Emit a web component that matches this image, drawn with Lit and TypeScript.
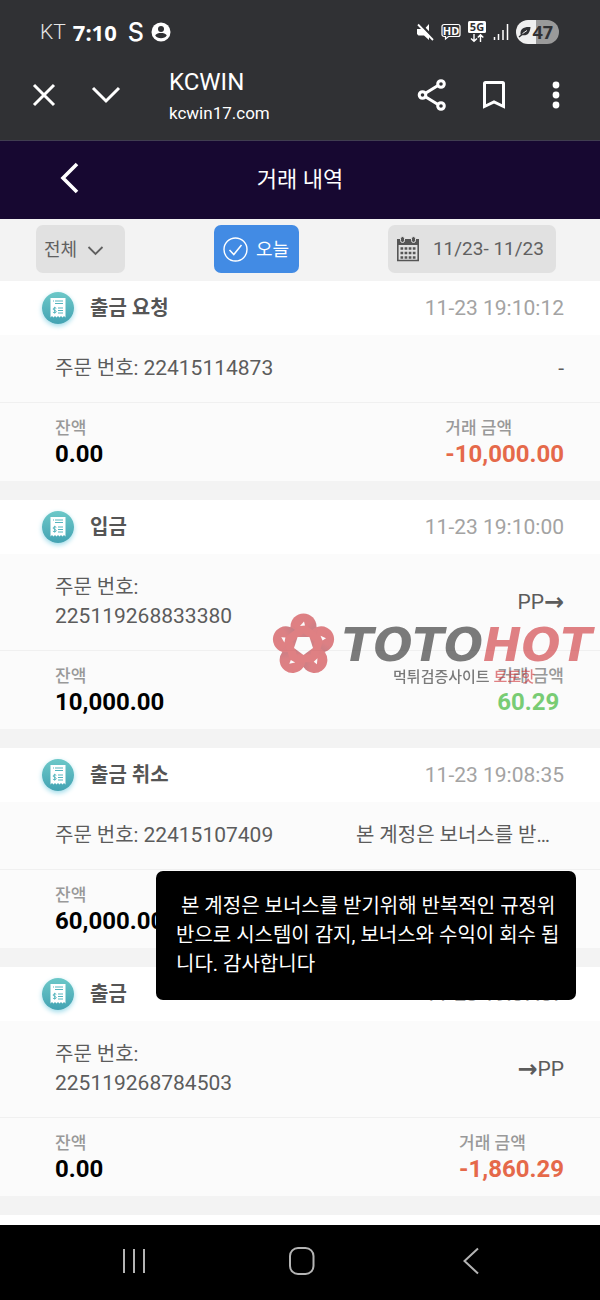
import { LitElement, html, css, svg, nothing } from "lit";
import { customElement, property } from "lit/decorators.js";
import { classMap } from "lit/directives/class-map.js";

interface Transaction {
  title: string;
  time: string;
  order: string;
  route?: string;
  memo?: string;
  balance: string;
  amount: string;
  positive?: boolean;
  notice?: string;
  watermark?: boolean;
}

const NOTICE =
  "본 계정은 보너스를 받기위해 반복적인 규정위반으로 시스템이 감지, 보너스와 수익이 회수 됩니다. 감사합니다";

const TRANSACTIONS: Transaction[] = [
  { title: "출금 요청", time: "11-23 19:10:12", order: "22415114873", route: "-", balance: "0.00", amount: "-10,000.00" },
  { title: "입금", time: "11-23 19:10:00", order: "225119268833380", route: "PP→", balance: "10,000.00", amount: "60.29", positive: true, watermark: true },
  { title: "출금 취소", time: "11-23 19:08:35", order: "22415107409", memo: NOTICE, balance: "60,000.00", amount: "60,000.00", positive: true, notice: NOTICE },
  { title: "출금", time: "11-23 19:07:07", order: "225119268784503", route: "→PP", balance: "0.00", amount: "-1,860.29" },
];

const KOREAN_STACK = css`Roboto, "Noto Sans CJK KR", sans-serif`;

@customElement("status-bar")
export class StatusBar extends LitElement {
  static styles = css`
    :host { display: flex; align-items: center; justify-content: space-between; height: 64px; padding: 0 41px 0 40px; color: #fff; }
    .side { display: flex; align-items: center; }
    .left { gap: 7px; }
    .right { gap: 7px; }
    .carrier { font: 300 21px/28px Roboto, sans-serif; color: #e6e6e6; }
    .clock { font: 700 22px/28px "Noto Sans", sans-serif; }
    .app { margin-left: 4px; font: 500 25px/28px Inter, sans-serif; }
    .battery { display: flex; align-items: center; gap: 1px; height: 24px; padding: 0 6px 0 2px; border-radius: 12px; color: #303134; background: linear-gradient(90deg, #efefef 47%, #9a9a9a 47%); font: 700 18px/24px "Noto Sans", sans-serif; }
    svg { display: block; }
    .small { font: 700 11px "Noto Sans", sans-serif; }
  `;

  render() {
    return html`
      <div class="side left">
        <span class="carrier">KT</span>
        <span class="clock">7:10</span>
        <span class="app">S</span>
        <svg width="20" height="20" viewBox="0 0 20 20" aria-hidden="true">
          <circle cx="10" cy="10" r="9.5" fill="#fff" />
          <circle cx="10" cy="7" r="3" fill="#303134" />
          <path d="M4.200 13.200C5.400 11.300 7.600 10.900 10 10.900s4.600.4 5.800 2.300C14.600 15.400 12.600 16.200 10 16.200S5.400 15.400 4.200 13.200z" fill="#303134" />
        </svg>
      </div>
      <div class="side right">
        <svg width="18" height="18" viewBox="0 0 18 18" aria-hidden="true">
          <path d="M1 6h4l3.500 0L13 1v16L8 12.500H2.500L1 11z" fill="#fff" />
          <path d="M3.500.5 18.500 15.500" stroke="#303134" stroke-width="2.600" />
          <path d="M2 1.500 17 17" stroke="#fff" stroke-width="1.800" />
        </svg>
        <svg width="20" height="18" viewBox="0 0 20 18" aria-hidden="true">
          <path d="M3 1.500h14a2 2 0 0 1 2 2v8a2 2 0 0 1-2 2H7.500L4.500 16v-2.500H3a2 2 0 0 1-2-2v-8a2 2 0 0 1 2-2z" fill="none" stroke="#fff" stroke-width="1.200" />
          <text class="small" x="10" y="11.500" text-anchor="middle" fill="#fff">HD</text>
        </svg>
        <svg width="18" height="22" viewBox="0 0 18 22" aria-hidden="true">
          <rect width="18" height="12" rx="1.500" fill="#fff" />
          <text class="small" x="9" y="10" text-anchor="middle" fill="#303134">5G</text>
          <path d="M6 13v7M3 17.500 6 20.300 9 17.500M12.500 21v-7M9.800 16.500l2.700-2.800 2.800 2.800" fill="none" stroke="#fff" stroke-width="1.400" />
        </svg>
        <svg width="16" height="18" viewBox="0 0 16 18" aria-hidden="true">
          <path d="M1.500 14v3M5.500 11v6M10 7v10M14.500 1v16" stroke="#fff" stroke-width="1.500" />
        </svg>
        <div class="battery">
          <svg width="13" height="14" viewBox="0 0 13 14" aria-hidden="true">
            <path d="M12.500 2C6 1.500 2 3.500 2.500 9.500 8 12 12 9 12.500 2z" fill="#303134" />
            <path d="M1 12C3.500 10 6 8 9 5.500" fill="none" stroke="#303134" stroke-width="1.400" />
            <path d="M4.500 8.600 9 5.500" stroke="#efefef" stroke-width="1" />
          </svg>
          <span>47</span>
        </div>
      </div>
    `;
  }
}

@customElement("browser-bar")
export class BrowserBar extends LitElement {
  static styles = css`
    :host { display: flex; align-items: center; gap: 30px; padding: 0 28px 14px; color: #fff; }
    button { display: grid; place-items: center; width: 32px; height: 32px; padding: 0; border: 0; background: none; color: inherit; }
    svg { display: block; fill: none; stroke: currentColor; stroke-width: 3; }
    .page { flex: 1; min-width: 0; padding-left: 17px; }
    .name { font: 400 24px/36px Roboto, sans-serif; }
    .host { font: 400 17px/26px Roboto, sans-serif; }
  `;

  render() {
    return html`
      <button aria-label="닫기"><svg width="24" height="24" viewBox="0 0 24 24"><path d="M2 2 22 22M22 2 2 22" /></svg></button>
      <button aria-label="최소화"><svg width="30" height="20" viewBox="0 0 30 20"><path d="M2 3 15 16 28 3" /></svg></button>
      <div class="page">
        <div class="name">KCWIN</div>
        <div class="host">kcwin17.com</div>
      </div>
      <button aria-label="공유">
        <svg width="30" height="32" viewBox="0 0 30 32"><path d="M8 14.500 21 6.500M8 17.500 21 25.500" /><circle cx="5.500" cy="16" r="3.300" /><circle cx="24" cy="5" r="3.300" /><circle cx="24" cy="27" r="3.300" /></svg>
      </button>
      <button aria-label="북마크">
        <svg width="24" height="30" viewBox="0 0 24 30"><path d="M2.500 3.500a1 1 0 0 1 1-1h17a1 1 0 0 1 1 1V26.500L12 22 2.500 26.500z" /></svg>
      </button>
      <button aria-label="더보기">
        <svg width="8" height="28" viewBox="0 0 8 28"><g fill="currentColor" stroke="none"><circle cx="4" cy="4" r="3.400" /><circle cx="4" cy="14" r="3.400" /><circle cx="4" cy="24" r="3.400" /></g></svg>
      </button>
    `;
  }
}

@customElement("filter-bar")
export class FilterBar extends LitElement {
  static styles = css`
    :host { display: flex; justify-content: space-between; padding: 6px 44px 8px 36px; background: #f3f3f3; color: #606060; }
    .control { display: flex; align-items: center; height: 48px; border: 0; border-radius: 7px; background: #e1e1e1; color: inherit; font: 400 18px/24px ${KOREAN_STACK}; }
    .kind { position: relative; width: 89px; }
    .kind select { width: 100%; height: 100%; padding: 2px 8px 0; border: 0; background: none; appearance: none; color: inherit; font: inherit; }
    .kind svg { position: absolute; right: 21px; top: 20px; pointer-events: none; }
    .today { gap: 8px; padding: 0 10px 0 9px; background: #428be4; color: #fff; }
    .today span { padding-top: 2px; }
    .range { gap: 13px; padding: 0 12px 0 8px; font-size: 19px; }
    svg { display: block; }
  `;

  render() {
    return html`
      <div class="control kind">
        <select aria-label="거래 유형"><option>전체</option></select>
        <svg width="17" height="11" viewBox="0 0 17 11"><path d="M1.500 2 8.500 9 15.500 2" fill="none" stroke="#606060" stroke-width="1.800" /></svg>
      </div>
      <button class="control today" aria-pressed="true">
        <svg width="25" height="25" viewBox="0 0 25 25"><circle cx="12.500" cy="12.500" r="11.500" fill="none" stroke="#fff" stroke-width="1.400" /><path d="M6.500 13 10.800 17.500 18.500 8" fill="none" stroke="#fff" stroke-width="1.500" /></svg>
        <span>오늘</span>
      </button>
      <button class="control range">
        <svg width="24" height="26" viewBox="0 0 24 26">
          <path d="M1.800 4h20.400v20.500H1.800z" fill="none" stroke="#555" stroke-width="1.600" />
          <path d="M1 3h22v6H1z" fill="#555" />
          <g fill="#555" stroke="#e1e1e1"><rect x="4.500" y=".5" width="4" height="6" rx="2" /><rect x="15.500" y=".5" width="4" height="6" rx="2" /></g>
          <path d="M4.500 12.500h15M4.500 17h15M4.500 21.500h15" stroke="#555" stroke-width="2.600" stroke-dasharray="2.700 1.400" />
        </svg>
        11/23- 11/23
      </button>
    `;
  }
}

@customElement("brand-watermark")
export class BrandWatermark extends LitElement {
  static styles = css`
    :host { display: flex; align-items: flex-start; gap: 7px; opacity: 0.6; color: #252525; pointer-events: none; white-space: nowrap; }
    svg { display: block; flex: none; }
    .words { display: flex; flex-direction: column; padding-top: 10px; }
    .name { font: italic 700 46px/44px "DejaVu Sans", sans-serif; }
    .tag { padding-left: 51px; font: 500 15px/20px ${KOREAN_STACK}; }
    .red { color: #cd3035; }
  `;

  render() {
    const turns = [0, 72, 144, 216, 288];
    return html`
      <svg width="63" height="63" viewBox="-31.500 -32 63 63" aria-hidden="true">
        <defs>
          <linearGradient id="fold" x1="0" y1="0" x2="1" y2="1">
            <stop offset="0" stop-color="#cd3035" />
            <stop offset=".55" stop-color="#c82f36" />
            <stop offset="1" stop-color="#8a2a38" />
          </linearGradient>
          <mask id="holes">
            <rect x="-32" y="-32" width="64" height="64" fill="#fff" />
            <path d="M-5.900-8.100H5.900L9.500 3.100 0 10-9.500 3.100z" fill="#000" />
            ${turns.map((a) => svg`<path d="M-3.500-19 .5-23.500 1.500-19.500z" fill="#000" transform="rotate(${a})" />`)}
          </mask>
        </defs>
        <g mask="url(#holes)">
          <circle r="22" fill="#cd3035" />
          ${turns.map((a) => svg`<circle cy="-18.500" r="13" fill="url(#fold)" transform="rotate(${a})" />`)}
          ${turns.map((a) => svg`<path d="M-9-23 13-7" stroke="#cd3035" stroke-width="8" transform="rotate(${a})" />`)}
        </g>
      </svg>
      <div class="words">
        <div class="name">TOTO<span class="red">HOT</span></div>
        <div class="tag">먹튀검증사이트 <span class="red">토토핫</span></div>
      </div>
    `;
  }
}

@customElement("transaction-card")
export class TransactionCard extends LitElement {
  @property({ attribute: false }) item!: Transaction;

  static styles = css`
    :host { display: block; position: relative; border-bottom: 19px solid #f3f3f3; background: #fbfbfb; font: 400 20px/29px ${KOREAN_STACK}; color: #5c5c5c; }
    .head { display: flex; align-items: center; gap: 16px; height: 54px; padding: 0 36px 0 42px; background: #fff; }
    .badge { display: grid; place-items: center; width: 32px; height: 32px; border-radius: 50%; background: linear-gradient(#6cc8c8, #43a3b3); box-shadow: 0 2px 5px #9fdcea; }
    .title { flex: 1; margin: 0; font-size: 20px; font-weight: 700; line-height: 29px; color: #555; }
    .time { font-size: 21px; color: #a3a3a3; }
    .order { display: grid; grid-template-columns: 1fr 1fr; align-items: center; padding: 19px 36px 19px 55px; border-bottom: 1px solid #f0f0f0; }
    .number { font-size: 21px; }
    .extra { justify-self: end; display: flex; align-items: center; font-size: 21px; }
    .arrow { font: 700 24px/24px "DejaVu Sans", sans-serif; }
    .memo { justify-self: end; width: 208px; overflow: hidden; white-space: nowrap; text-overflow: ellipsis; }
    .sums { display: flex; justify-content: space-between; padding: 13px 36px 13px 55px; }
    .label { font-size: 17px; line-height: 24px; font-weight: 500; color: #999; }
    .value { font-size: 24px; line-height: 28px; font-weight: 700; color: #000; }
    .minus { color: #e5694a; }
    .plus { color: #78cc74; }
    .tip { position: absolute; z-index: 2; top: 123px; right: 24px; box-sizing: border-box; width: 420px; padding: 21px 16px 21px 20px; border-radius: 7px; background: #000; color: #fff; white-space: pre-wrap; word-break: break-all; }
    .mark { position: absolute; z-index: 1; top: 113px; right: 8px; }
    svg { display: block; }
  `;

  private route(text = "") {
    return text.split(/(→)/).map((part) => (part === "→" ? html`<span class="arrow">→</span>` : html`<span>${part}</span>`));
  }

  render() {
    const t = this.item;
    return html`
      <div class="head">
        <span class="badge">
          <svg width="16" height="20" viewBox="0 0 16 20" aria-hidden="true">
            <path d="M.5 0h15v19.500l-1.500-1.500-1.500 1.500L11 18l-1.500 1.500L8 18l-1.500 1.500L5 18l-1.500 1.500L2 18 .5 19.500z" fill="#fff" />
            <path d="M3 3h1M5 3h8M5 5.500h8M8 10h5M8 12.500h5M8 15h5" stroke="#56b5be" stroke-width="1.200" />
            <path d="M6.300 10.300C5 9.300 3 9.800 3.200 11.200c.2 1.400 3 1 3 2.400 0 1.300-2.200 1.500-3.300.5M4.700 8.800v6.700" fill="none" stroke="#56b5be" stroke-width="1" />
          </svg>
        </span>
        <h2 class="title">${t.title}</h2>
        <time class="time">${t.time}</time>
      </div>
      <div class="order">
        <div>주문 번호: <span class="number">${t.order}</span></div>
        ${t.memo ? html`<div class="memo">${t.memo}</div>` : html`<div class="extra">${this.route(t.route)}</div>`}
      </div>
      <div class="sums">
        <div>
          <div class="label">잔액</div>
          <div class="value">${t.balance}</div>
        </div>
        <div>
          <div class="label">거래 금액</div>
          <div class=${classMap({ value: true, plus: !!t.positive, minus: !t.positive })}>${t.amount}</div>
        </div>
      </div>
      ${t.notice ? html`<div class="tip" role="tooltip"> ${t.notice}</div>` : nothing}
      ${t.watermark ? html`<brand-watermark class="mark"></brand-watermark>` : nothing}
    `;
  }
}

@customElement("app-root")
export class AppRoot extends LitElement {
  static styles = css`
    :host { display: flex; flex-direction: column; min-height: 100vh; background: #fff; font-family: ${KOREAN_STACK}; }
    .chrome { border-bottom: 1px solid #403d50; background: #303134; }
    .bar { display: grid; grid-template-columns: 1fr auto 1fr; align-items: center; height: 78px; padding: 0 53px 4px; box-sizing: border-box; background: #170831; color: #fff; }
    .bar h1 { margin: 0; padding-top: 3px; font-size: 22px; font-weight: 400; line-height: 32px; }
    button { display: grid; place-items: center; width: 32px; height: 40px; padding: 0; border: 0; background: none; color: inherit; }
    .list { flex: 1; }
    .nav { display: grid; grid-template-columns: repeat(3, 1fr); justify-items: center; align-items: center; height: 75px; padding: 0 45px 3px 50px; box-sizing: border-box; background: #000; color: #b4b4b4; }
    svg { display: block; fill: none; stroke: currentColor; }
  `;

  render() {
    return html`
      <div class="chrome">
        <status-bar></status-bar>
        <browser-bar></browser-bar>
      </div>
      <header class="bar">
        <button aria-label="뒤로"><svg width="20" height="32" viewBox="0 0 20 32"><path d="M18 2 4 16 18 30" stroke-width="3.600" /></svg></button>
        <h1>거래 내역</h1>
      </header>
      <filter-bar></filter-bar>
      <main class="list">${TRANSACTIONS.map((item) => html`<transaction-card .item=${item}></transaction-card>`)}</main>
      <nav class="nav">
        <button aria-label="최근 앱"><svg width="26" height="28" viewBox="0 0 26 28"><path d="M3 2v24M13 2v24M23 2v24" stroke-width="2" /></svg></button>
        <button aria-label="홈"><svg width="28" height="30" viewBox="0 0 28 30"><rect x="2" y="2" width="23.500" height="26" rx="8" stroke-width="2" /></svg></button>
        <button aria-label="뒤로 가기"><svg width="18" height="28" viewBox="0 0 18 28"><path d="M16 1.500 2.500 14 16 26.500" stroke-width="2" /></svg></button>
      </nav>
    `;
  }
}
